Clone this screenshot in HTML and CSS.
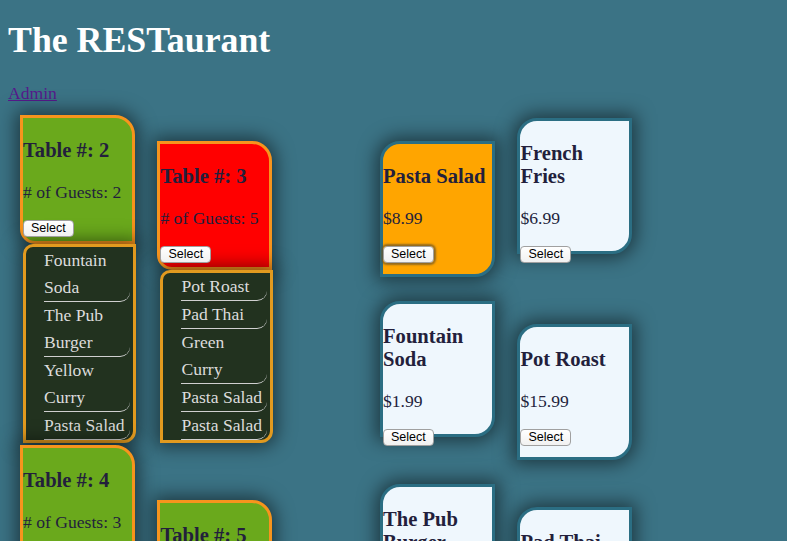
FILE: index.html
```html
<!DOCTYPE html>
<html>
<head>
<meta charset="utf-8">
<title>The RESTaurant</title>
<link rel="stylesheet" href="styles.css">
</head>
<body>
<div class="page">
  <h1 class="title">The RESTaurant</h1>
  <p class="admin"><a href="#">Admin</a></p>
  <div class="main">
    <div class="tables">
      <div class="group">
        <div class="tcard green">
          <h3>Table #: 2</h3>
          <p># of Guests: 2</p>
          <div class="act"><button class="btn">Select</button></div>
        </div>
        <ul class="orders">
          <li>Fountain Soda</li>
          <li>The Pub Burger</li>
          <li>Yellow Curry</li>
          <li>Pasta Salad</li>
        </ul>
      </div>
      <div class="group">
        <div class="tcard red">
          <h3>Table #: 3</h3>
          <p># of Guests: 5</p>
          <div class="act"><button class="btn">Select</button></div>
        </div>
        <ul class="orders">
          <li>Pot Roast</li>
          <li>Pad Thai</li>
          <li>Green Curry</li>
          <li>Pasta Salad</li>
          <li>Pasta Salad</li>
        </ul>
      </div>
      <div class="group">
        <div class="tcard green">
          <h3>Table #: 4</h3>
          <p># of Guests: 3</p>
          <div class="act"><button class="btn">Select</button></div>
        </div>
        <ul class="orders">
          <li>Fountain Soda</li>
          <li>Pot Roast</li>
          <li>Pad Thai</li>
        </ul>
      </div>
      <div class="group">
        <div class="tcard green">
          <h3>Table #: 5</h3>
          <p># of Guests: 2</p>
          <div class="act"><button class="btn">Select</button></div>
        </div>
        <ul class="orders">
          <li>Pot Roast</li>
          <li>Pad Thai</li>
        </ul>
      </div>
    </div>
    <div class="menu">
      <div class="mcard selected">
        <h3>Pasta Salad</h3>
        <p>$8.99</p>
        <div class="act"><button class="btn focus">Select</button></div>
      </div>
      <div class="mcard">
        <h3>French Fries</h3>
        <p>$6.99</p>
        <div class="act"><button class="btn">Select</button></div>
      </div>
      <div class="mcard">
        <h3>Fountain Soda</h3>
        <p>$1.99</p>
        <div class="act"><button class="btn">Select</button></div>
      </div>
      <div class="mcard">
        <h3>Pot Roast</h3>
        <p>$15.99</p>
        <div class="act"><button class="btn">Select</button></div>
      </div>
      <div class="mcard">
        <h3>The Pub Burger</h3>
        <p>$11.99</p>
        <div class="act"><button class="btn">Select</button></div>
      </div>
      <div class="mcard">
        <h3>Pad Thai</h3>
        <p>$12.99</p>
        <div class="act"><button class="btn">Select</button></div>
      </div>
    </div>
  </div>
</div>
</body>
</html>
```
FILE: styles.css
```css
html {
  font-size: 17.6px;
}
body {
  margin: 0;
  background: #3b7385;
  font-family: "Liberation Serif", "Times New Roman", serif;
  font-size: 17.6px;
  overflow: hidden;
}
.page {
  padding: 0 8px;
}
.title {
  margin: 20px 0 0;
  font-size: 35.8px;
  line-height: 40px;
  font-weight: bold;
  color: #ffffff;
}
.admin {
  margin: 23px 0 10px;
  line-height: 20px;
}
.admin a {
  color: #551a8b;
}
.main {
  display: flex;
  align-items: flex-start;
}
.tables {
  width: 360px;
  flex: none;
  box-sizing: border-box;
  padding-left: 3px;
}
.menu {
  width: 300px;
  flex: none;
  box-sizing: border-box;
  padding-left: 3px;
}
.group {
  display: inline-block;
  vertical-align: baseline;
  width: 115px;
  margin: 2px 9px 0 9px;
}
.tcard {
  box-sizing: border-box;
  width: 115px;
  border: 3px solid #f7941d;
  border-top-right-radius: 20px;
  border-bottom-left-radius: 15px;
  padding-bottom: 4px;
  color: #231f3c;
  box-shadow: 0 0 18px 4px rgba(0, 0, 0, 0.5);
}
.tcard.green {
  background: #6aa91c;
}
.tcard.red {
  background: #ff0000;
}
.tcard h3,
.mcard h3 {
  margin: 20.6px 0;
  font-size: 20.6px;
  font-weight: bold;
}
.tcard p,
.mcard p {
  margin: 17.6px 0;
  line-height: 20.2px;
}
.act {
  font-family: "Liberation Sans", Arial, sans-serif;
  font-size: 12px;
  line-height: 17px;
  height: 17px;
}
.btn {
  vertical-align: top;
  box-sizing: border-box;
  height: 17px;
  padding: 0 7px;
  margin: 0;
  border: 1px solid #a0a0a0;
  border-radius: 4px;
  background: linear-gradient(#ffffff, #f1f1f1);
  font-family: "Liberation Sans", Arial, sans-serif;
  font-size: 12.5px;
  line-height: 15px;
  color: #000000;
}
.btn.focus {
  box-shadow: 0 0 2px 2px rgba(110, 85, 40, 0.75);
}
.orders {
  list-style: none;
  margin: 0 -1px 0 3px;
  padding: 0 0 0 18px;
  background: #22321f;
  border: 3px solid #e29a1f;
  border-top-left-radius: 10px;
  border-bottom-right-radius: 12px;
  box-shadow: 0 0 18px 4px rgba(0, 0, 0, 0.5);
}
.orders li {
  width: 86px;
  line-height: 27px;
  color: #dcdcdc;
  border-bottom: 1px solid #d0d0d0;
  border-bottom-right-radius: 10px;
}
.mcard {
  display: inline-block;
  vertical-align: baseline;
  box-sizing: border-box;
  width: 115px;
  height: 136px;
  margin: 5px 9px 19px 9px;
  background: #eff7fd;
  border: 3px solid #2b6e83;
  border-top-left-radius: 20px;
  border-bottom-right-radius: 20px;
  color: #231f3c;
  box-shadow: 0 0 18px 4px rgba(0, 0, 0, 0.5);
}
.mcard.selected {
  background: #ffa500;
}
```
